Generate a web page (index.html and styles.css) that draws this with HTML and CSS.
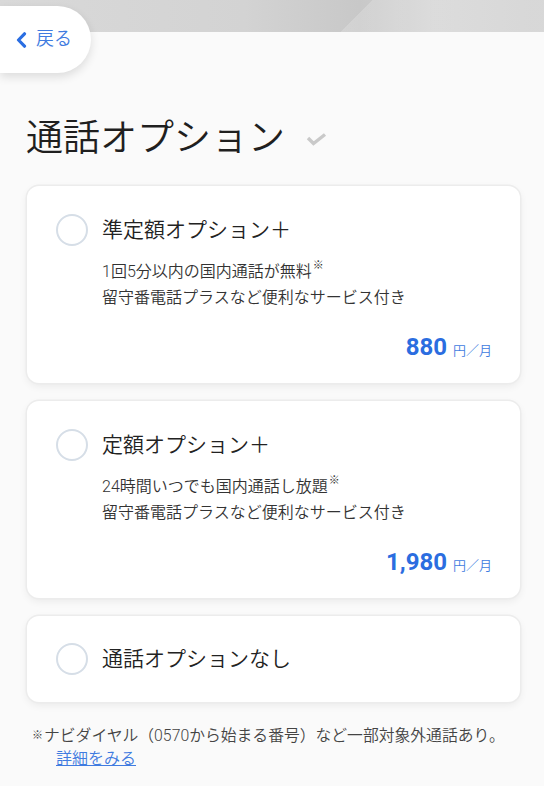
FILE: index.html
```html
<!DOCTYPE html>
<html lang="ja">
<head>
<meta charset="utf-8">
<title>通話オプション</title>
<link rel="stylesheet" href="styles.css">
</head>
<body>
<div class="top-strip"></div>
<a class="back-btn" href="#">
  <svg class="back-icon" width="12" height="16" viewBox="0 0 12 16"><path d="M9.5 1.8 L3.5 8 L9.5 14.2" fill="none" stroke="#2b6ee2" stroke-width="3.2" stroke-linecap="round" stroke-linejoin="round"/></svg>
  <span class="back-label">戻る</span>
</a>
<main class="sheet">
  <h1 class="title">通話オプション<svg class="title-check" width="22" height="14" viewBox="0 0 22 14"><path d="M2 5 L7.5 10.5 L19 1.5" fill="none" stroke="#c9c9c9" stroke-width="3.4"/></svg></h1>

  <div class="cards">
    <div class="card">
      <div class="card-head">
        <span class="radio"></span>
        <span class="card-title">準定額オプション＋</span>
      </div>
      <p class="card-desc">1回5分以内の国内通話が無料<sup class="mark">※</sup><br>留守番電話プラスなど便利なサービス付き</p>
      <div class="price"><span class="price-num">880</span><span class="price-unit">円／月</span></div>
    </div>

    <div class="card">
      <div class="card-head">
        <span class="radio"></span>
        <span class="card-title">定額オプション＋</span>
      </div>
      <p class="card-desc">24時間いつでも国内通話し放題<sup class="mark">※</sup><br>留守番電話プラスなど便利なサービス付き</p>
      <div class="price"><span class="price-num">1,980</span><span class="price-unit">円／月</span></div>
    </div>

    <div class="card card-simple">
      <div class="card-head">
        <span class="radio"></span>
        <span class="card-title">通話オプションなし</span>
      </div>
    </div>
  </div>

  <div class="note">
    <p class="note-line"><span class="note-mark">※</span>ナビダイヤル（0570から始まる番号）など一部対象外通話あり。</p>
    <a class="note-link" href="#">詳細をみる</a>
  </div>
</main>
</body>
</html>
```

FILE: styles.css
```css
* { box-sizing: border-box; }
html, body { margin: 0; padding: 0; }
body {
  width: 544px;
  min-height: 786px;
  font-family: Roboto, "Noto Sans CJK JP", sans-serif;
  font-weight: 350;
  color: #222;
  background: #fafafa;
  position: relative;
}
.top-strip {
  height: 32px;
  background:
    linear-gradient(135deg, rgba(255,255,255,0) 64.7%, rgba(255,255,255,0.18) 64.7%),
    linear-gradient(90deg, #d9d9d9 0%, #d3d3d3 45%, #c8c8c8 66%, #d4d4d4 80%, #cfcfcf 100%);
}
.back-btn {
  position: absolute;
  top: 6px;
  left: 0;
  width: 91px;
  height: 67px;
  background: #fff;
  border-radius: 0 34px 34px 0;
  box-shadow: 0 4px 10px rgba(0,0,0,0.12);
  display: flex;
  align-items: center;
  padding-left: 15px;
  gap: 9px;
  text-decoration: none;
  z-index: 2;
}
.back-icon { display: block; }
.back-label {
  font-size: 18px;
  color: #3f7be0;
  line-height: 1;
  margin-top: -1px;
}
.sheet {
  background: #fafafa;
  border-top-right-radius: 34px;
  padding: 81px 24px 30px 26px;
  position: relative;
  min-height: 754px;
}
.title {
  margin: 0;
  font-size: 37px;
  font-weight: 350;
  line-height: 52px;
  height: 52px;
  color: #1f1f1f;
  display: flex;
  align-items: center;
}
.title-check {
  margin-left: 21px;
  margin-top: 2px;
}
.cards {
  margin-top: 21px;
  margin-left: 1px;
  display: flex;
  flex-direction: column;
  gap: 18px;
}
.card {
  background: #fff;
  border-radius: 12px;
  box-shadow: 0 0 0 1.5px #ececec, 0 3px 8px rgba(0,0,0,0.07);
  padding: 28px 28px 17px 29px;
}
.card-simple { padding-top: 27px; padding-bottom: 27px; }
.card-head {
  display: flex;
  align-items: center;
  gap: 14px;
  height: 32px;
}
.radio {
  width: 32px;
  height: 32px;
  border-radius: 50%;
  border: 2.5px solid #d6dee7;
  flex: none;
}
.card-title {
  font-size: 21px;
  line-height: 32px;
  color: #222;
}
.card-desc {
  margin: 13px 0 0 46px;
  font-size: 16px;
  line-height: 26px;
  color: #333;
}
.mark {
  font-size: 11px;
  font-weight: 400;
  vertical-align: top;
  line-height: 1;
  position: relative;
  top: 1px;
  margin-left: 1px;
  color: #333;
}
.price {
  margin-top: 21px;
  display: flex;
  justify-content: flex-end;
  align-items: baseline;
  gap: 6px;
  line-height: 30px;
}
.price-num {
  font-size: 24px;
  font-weight: 700;
  color: #2b6de0;
}
.price-unit {
  font-size: 13px;
  color: #3f7be0;
}
.note {
  margin-top: 22px;
  padding-left: 6px;
  font-size: 15.8px;
  line-height: 23px;
  color: #444;
}
.note-line {
  margin: 0;
  white-space: nowrap;
}
.note-mark {
  font-size: 11px;
  font-weight: 400;
  vertical-align: 2px;
  margin-right: 1px;
}
.note-link {
  display: inline-block;
  margin-left: 24px;
  color: #3f7be0;
  text-decoration: underline;
  font-size: 16px;
}
```
